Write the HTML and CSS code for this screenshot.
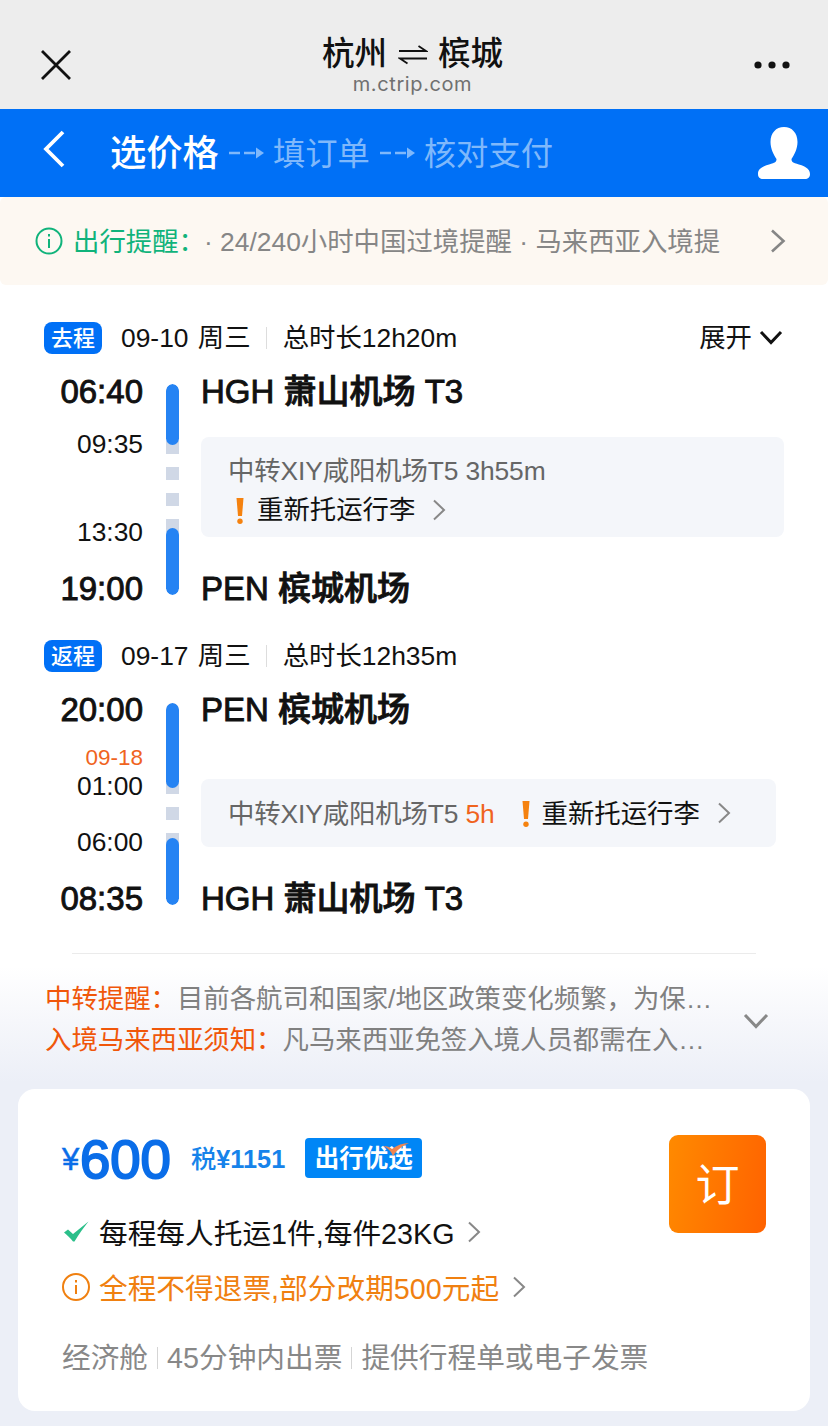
FILE: index.html
```html
<!DOCTYPE html>
<html lang="zh-CN">
<head>
  <meta charset="UTF-8">
  <meta name="viewport" content="width=device-width, initial-scale=1.0">
  <title>杭州 ⇌ 槟城</title>
  <link rel="stylesheet" href="styles.css">
</head>
<body>
  <header class="browser-bar">
    <svg class="close" width="32" height="32" viewBox="0 0 32 32"><path d="M2 2L30 30M30 2L2 30"/></svg>
    <div class="page-title">
      <div class="cities">
        <span>杭州</span>
        <svg class="swap" width="30" height="20" viewBox="0 0 30 20"><path d="M1 6H28L20.5 1M29 13.5H2L9.5 18.5"/></svg>
        <span>槟城</span>
      </div>
      <div class="domain">m.ctrip.com</div>
    </div>
    <svg class="more" width="36" height="8" viewBox="0 0 36 8"><circle cx="4" cy="4" r="3.6"/><circle cx="18" cy="4" r="3.6"/><circle cx="32" cy="4" r="3.6"/></svg>
  </header>

  <nav class="steps">
    <svg class="back" width="24" height="38" viewBox="0 0 24 38"><path d="M21 2L4 19L21 36"/></svg>
    <span class="step current">选价格</span>
    <svg class="step-arrow" width="36" height="12" viewBox="0 0 36 12"><path class="dash" d="M0 6H11M15 6H26"/><path class="tip" d="M27 0.5L35 6L27 11.5Z"/></svg>
    <span class="step">填订单</span>
    <svg class="step-arrow" width="36" height="12" viewBox="0 0 36 12"><path class="dash" d="M0 6H11M15 6H26"/><path class="tip" d="M27 0.5L35 6L27 11.5Z"/></svg>
    <span class="step">核对支付</span>
    <svg class="user" width="54" height="54" viewBox="0 0 54 54"><path d="M27 1C35 1 40.5 7 40.5 16C40.5 23 37 29 34.5 33C34.5 36 36 36.500 39 37.500C47 40 53 42 53 48C53 51.500 51 53 48 53H6C3 53 1 51.500 1 48C1 42 7 40 15 37.500C18 36.500 19.500 36 19.500 33C17 29 13.500 23 13.500 16C13.500 7 19 1 27 1Z"/></svg>
  </nav>

  <section class="notice">
    <svg class="info" width="28" height="28" viewBox="0 0 28 28"><circle cx="14" cy="14" r="12.5"/><path d="M14 12V21M14 7V9.5"/></svg>
    <span class="notice-label">出行提醒：</span>
    <span class="notice-text">· 24/240小时中国过境提醒 · 马来西亚入境提</span>
    <svg class="chevron" width="16" height="24" viewBox="0 0 16 24"><path d="M2 1.5L13.5 12L2 22.5"/></svg>
  </section>

  <main class="trip">
    <section class="leg">
      <div class="leg-head">
        <span class="tag">去程</span>
        <span class="date">09-10 周三</span>
        <span class="duration">总时长12h20m</span>
        <span class="expand">展开<svg width="24" height="16" viewBox="0 0 24 16"><path d="M2 2L12 12.5L22 2"/></svg></span>
      </div>
      <div class="route">
        <div class="times">
          <strong>06:40</strong>
          <span class="arrive">09:35</span>
          <span class="depart">13:30</span>
          <strong>19:00</strong>
        </div>
        <div class="line">
          <i class="fly first"></i>
          <i class="fly last"></i>
        </div>
        <div class="stops">
          <strong>HGH 萧山机场 T3</strong>
          <div class="transfer tall">
            <div class="via">中转XIY咸阳机场T5 3h55m</div>
            <div class="luggage"><svg class="alert" width="8" height="26" viewBox="0 0 8 26"><path d="M0.5 0H7.5L6 18H2Z"/><circle cx="4" cy="23.3" r="2.7"/></svg>重新托运行李<svg class="go" width="14" height="22" viewBox="0 0 14 22"><path d="M2 1.5L12 11L2 20.5"/></svg></div>
          </div>
          <strong>PEN 槟城机场</strong>
        </div>
      </div>
    </section>

    <section class="leg return">
      <div class="leg-head">
        <span class="tag">返程</span>
        <span class="date">09-17 周三</span>
        <span class="duration">总时长12h35m</span>
      </div>
      <div class="route">
        <div class="times">
          <strong>20:00</strong>
          <em>09-18</em>
          <span class="arrive">01:00</span>
          <span class="depart">06:00</span>
          <strong>08:35</strong>
        </div>
        <div class="line">
          <i class="fly first"></i>
          <i class="fly last"></i>
        </div>
        <div class="stops">
          <strong>PEN 槟城机场</strong>
          <div class="transfer">
            <div class="via">中转XIY咸阳机场T5 <b>5h</b></div>
            <div class="luggage"><svg class="alert" width="8" height="26" viewBox="0 0 8 26"><path d="M0.5 0H7.5L6 18H2Z"/><circle cx="4" cy="23.3" r="2.7"/></svg>重新托运行李<svg class="go" width="14" height="22" viewBox="0 0 14 22"><path d="M2 1.5L12 11L2 20.5"/></svg></div>
          </div>
          <strong>HGH 萧山机场 T3</strong>
        </div>
      </div>
    </section>
  </main>

  <section class="tips">
    <div class="tips-text">
      <p><span>中转提醒：</span>目前各航司和国家/地区政策变化频繁，为保…</p>
      <p><span>入境马来西亚须知：</span>凡马来西亚免签入境人员都需在入…</p>
    </div>
    <svg class="tips-more" width="26" height="17" viewBox="0 0 26 17"><path d="M2 2L13 13.5L24 2"/></svg>
  </section>

  <section class="fare">
    <div class="fare-info">
      <div class="price-row">
        <span class="yen">¥</span><span class="price">600</span>
        <span class="tax">税<b>¥1151</b></span>
        <span class="brand">出行优选<svg width="27" height="13" viewBox="0 0 27 13"><path d="M0 3C4 3 7 4 9 6C14 2 20 0 26 0C19 3 14 7 10 13C8 8 5 5 0 3Z"/></svg></span>
      </div>
      <div class="rule baggage">
        <svg class="rule-icon" width="28" height="28" viewBox="0 0 28 28"><path d="M2 14.5L6 11.500L11 16L26.500 3.500C22 9 17 16 12.500 23.500H11C8.500 20 5 17 2 14.500Z"/></svg>每程每人托运1件,每件23KG<svg class="go" width="14" height="22" viewBox="0 0 14 22"><path d="M2 1.5L12 11L2 20.5"/></svg>
      </div>
      <div class="rule refund">
        <svg class="rule-icon info" width="28" height="28" viewBox="0 0 28 28"><circle cx="14" cy="14" r="13"/><path d="M14 12V21M14 7V9.5"/></svg>全程不得退票,部分改期500元起<svg class="go" width="14" height="22" viewBox="0 0 14 22"><path d="M2 1.5L12 11L2 20.5"/></svg>
      </div>
      <div class="extras">
        <span>经济舱</span>
        <span>45分钟内出票</span>
        <span>提供行程单或电子发票</span>
      </div>
    </div>
    <button class="book">订</button>
  </section>
</body>
</html>
```
FILE: styles.css
```css
* {
  box-sizing: border-box;
}

body {
  margin: 0;
  width: 828px;
  height: 1426px;
  overflow: hidden;
  background-color: #eceff7;
  color: #111;
  font-family: "Liberation Sans", "Noto Sans CJK SC", sans-serif;
  font-size: 26.4px;
  line-height: 40px;
  white-space: nowrap;
}

svg {
  flex: none;
  fill: none;
  stroke: currentColor;
}

strong {
  display: block;
  font-size: 33px;
  font-weight: 500;
  line-height: 40px;
  -webkit-text-stroke: 0.9px;
}

/* Browser bar */
.browser-bar {
  display: flex;
  height: 109px;
  padding: 0 38px 0 40px;
  background-color: #ededed;
}

.close {
  margin-top: 49px;
  stroke-width: 2.8;
}

.page-title {
  flex: 1;
  padding: 34px 1px 0 0;
  text-align: center;
}

.cities {
  display: flex;
  justify-content: center;
  align-items: center;
  height: 40px;
  gap: 10.5px;
  font-size: 32.5px;
  font-weight: 500;
}

.swap {
  margin-top: 2px;
  stroke-width: 1.8;
}

.domain {
  color: #707070;
  font-family: Inter, sans-serif;
  font-size: 20px;
  letter-spacing: 0.6px;
  line-height: 21px;
}

.more {
  margin-top: 61px;
  fill: #111;
  stroke: none;
}

/* Booking steps */
.steps {
  display: flex;
  align-items: center;
  height: 88px;
  padding: 0 17px 0 42px;
  background-color: #0070f6;
  color: #fff;
}

.back {
  margin: 0 44px 8px 0;
  stroke-width: 3.8;
}

.step {
  padding-top: 2px;
  color: #7fb8fb;
  font-size: 32.3px;
}

.step.current {
  color: #fff;
  font-size: 36.3px;
  font-weight: 500;
}

.step-arrow {
  margin: 0 8px 0 10px;
  color: #7fb8fb;
}

.step-arrow .dash {
  stroke-width: 2.5;
}

.step-arrow .tip {
  fill: currentColor;
  stroke: none;
}

.user {
  margin-left: auto;
  margin-bottom: 1px;
  fill: #fff;
  stroke: none;
}

/* Travel notice */
.notice {
  display: flex;
  align-items: center;
  height: 88px;
  padding: 0 42px 0 35px;
  border-radius: 6px;
  background-color: #fdf8f2;
  box-shadow: 0 0 0 6px #fff;
  clip-path: inset(0);
  color: #868686;
}

.info {
  stroke-width: 2;
}

.notice .info,
.notice-label {
  color: #10b37b;
}

.notice-label {
  width: 131px;
  margin-left: 10px;
}

.notice-label,
.notice-text {
  padding-top: 1px;
}

.chevron {
  margin-left: auto;
  stroke-width: 2.6;
}

/* Flight legs */
.trip {
  height: 668px;
  padding: 33px 44px 0;
  background-color: #fff;
}

.leg {
  height: 318px;
}

.leg-head {
  display: flex;
  align-items: center;
  height: 40px;
}

.tag {
  width: 58px;
  height: 32px;
  margin: 0 19px 1px 0;
  border-radius: 8px;
  background-color: #0070f6;
  color: #fff;
  font-size: 22px;
  font-weight: 500;
  line-height: 33px;
  text-align: center;
}

.date {
  word-spacing: 2px;
}

.duration {
  display: flex;
  align-items: center;
}

.duration::before {
  content: "";
  width: 1px;
  height: 22px;
  margin: 0 16px 0 15px;
  background-color: #ddd;
}

.expand {
  display: flex;
  align-items: center;
  gap: 7px;
  margin: 0 1px 0 auto;
}

.expand svg {
  stroke-width: 3;
}

.route {
  display: grid;
  grid-template-columns: 99px 36px 1fr;
  padding-top: 14px;
}

.times {
  display: flex;
  flex-direction: column;
  text-align: right;
}

.times .arrive {
  margin-top: 12px;
}

.times .depart {
  margin: 48px 0 17px;
}

.times em {
  margin-top: 18px;
  color: #f0641e;
  font-size: 22.5px;
  font-style: normal;
  line-height: 20px;
}

/* Blue parts are flights, the dashes between them are the wait */
.line {
  display: flex;
  flex-direction: column;
  justify-content: space-between;
  width: 13px;
  height: 211px;
  margin: 12px 0 0 23px;
  background: repeating-linear-gradient(#fff 0 5px, #d0d8e6 5px 18px, #fff 18px 26px);
  clip-path: inset(0 round 7px);
}

.fly {
  border-radius: 7px;
  background-color: #2583f3;
}

.fly.first {
  height: 61px;
}

.fly.last {
  height: 67px;
}

.stops {
  margin-left: 22px;
}

.transfer {
  display: flex;
  align-items: center;
  width: 575px;
  height: 68px;
  margin: 49px 0 32px;
  padding: 1px 0 0 27px;
  border-radius: 8px;
  background-color: #f4f6fa;
  color: #666;
}

.via {
  letter-spacing: -0.13px;
}

.transfer b {
  color: #f0641e;
  font-weight: 400;
}

.transfer.tall {
  display: block;
  width: 583px;
  height: 100px;
  margin: 25px 0 32px;
  padding-top: 15px;
  line-height: 39px;
}

.luggage {
  display: flex;
  align-items: center;
  margin-left: 27px;
  color: #111;
}

.tall .luggage {
  margin-left: 8px;
}

.alert {
  margin-right: 13px;
  fill: #f5820f;
  stroke: none;
}

.return .alert {
  margin-right: 12px;
}

.go {
  margin: 0 0 2px 17px;
  color: #888;
  stroke-width: 2;
}

.return .times .arrive {
  margin-top: -2px;
}

.return .times .depart {
  margin-top: 16px;
}

.return .line {
  height: 202px;
  margin-top: 13px;
  background: repeating-linear-gradient(#fff 0, #d0d8e6 0 13px, #fff 13px 26px);
}

.return .fly.first {
  height: 85px;
}

/* Transfer and entry tips */
.tips {
  position: relative;
  display: flex;
  align-items: center;
  height: 136px;
  padding: 0 59px 0 45px;
  background: linear-gradient(#fff 10%, #f6f7fb 50%, #eceff7 95%);
}

.tips::before {
  content: "";
  position: absolute;
  top: 0;
  left: 72px;
  width: 684px;
  height: 1px;
  background-color: #ebebeb;
}

.tips-text {
  flex: 1;
  padding-bottom: 3px;
  color: #808080;
}

.tips p {
  margin: 0;
  line-height: 41px;
}

.tips span {
  color: #f0570a;
}

.tips-more {
  color: #888;
  stroke-width: 3;
}

/* Fare card */
.fare {
  display: flex;
  justify-content: space-between;
  height: 322px;
  margin: 0 18px;
  padding: 46px 44px 0;
  border-radius: 17px;
  background-color: #fff;
  font-size: 28.7px;
}

.price-row {
  display: flex;
  align-items: center;
  height: 46px;
  color: #0a6de8;
}

.yen {
  width: 18px;
  padding-top: 3px;
  font-size: 31px;
  -webkit-text-stroke: 0.5px;
}

.price {
  padding-top: 4px;
  font-size: 54.5px;
  -webkit-text-stroke: 2px;
}

.tax {
  margin: 0 20px;
  padding-top: 1px;
  color: #1683ea;
  font-size: 25.3px;
  font-weight: 500;
}

.tax b {
  font-size: 25.3px;
}

.brand {
  position: relative;
  width: 117px;
  height: 40px;
  border-radius: 4px;
  background-color: #0086f6;
  color: #fff;
  font-size: 24.5px;
  font-weight: 700;
  line-height: 42px;
  text-align: center;
}

.brand svg {
  position: absolute;
  top: 5px;
  left: 78px;
  fill: #ef8550;
  stroke: none;
}

.rule {
  display: flex;
  align-items: center;
  height: 55px;
}

.baggage {
  margin-top: 25px;
}

.rule-icon {
  margin: 0 9px 3px 0;
}

.rule .go {
  margin: 0 0 4px 13px;
}

.baggage .rule-icon {
  fill: #2bbf8a;
  stroke: none;
}

.refund {
  color: #f08010;
}

.extras {
  display: flex;
  margin-top: 22px;
  color: #888;
}

.extras span {
  display: flex;
  align-items: center;
}

.extras span + span::before {
  content: "";
  width: 1px;
  height: 22px;
  margin: 0 9px;
  background-color: #d5d5d5;
}

.book {
  width: 97px;
  height: 98px;
  padding-bottom: 5px;
  border: none;
  border-radius: 9px;
  background: linear-gradient(100deg, #ff8a00, #ff6200);
  color: #fff;
  font-family: inherit;
  font-size: 44px;
}
```
